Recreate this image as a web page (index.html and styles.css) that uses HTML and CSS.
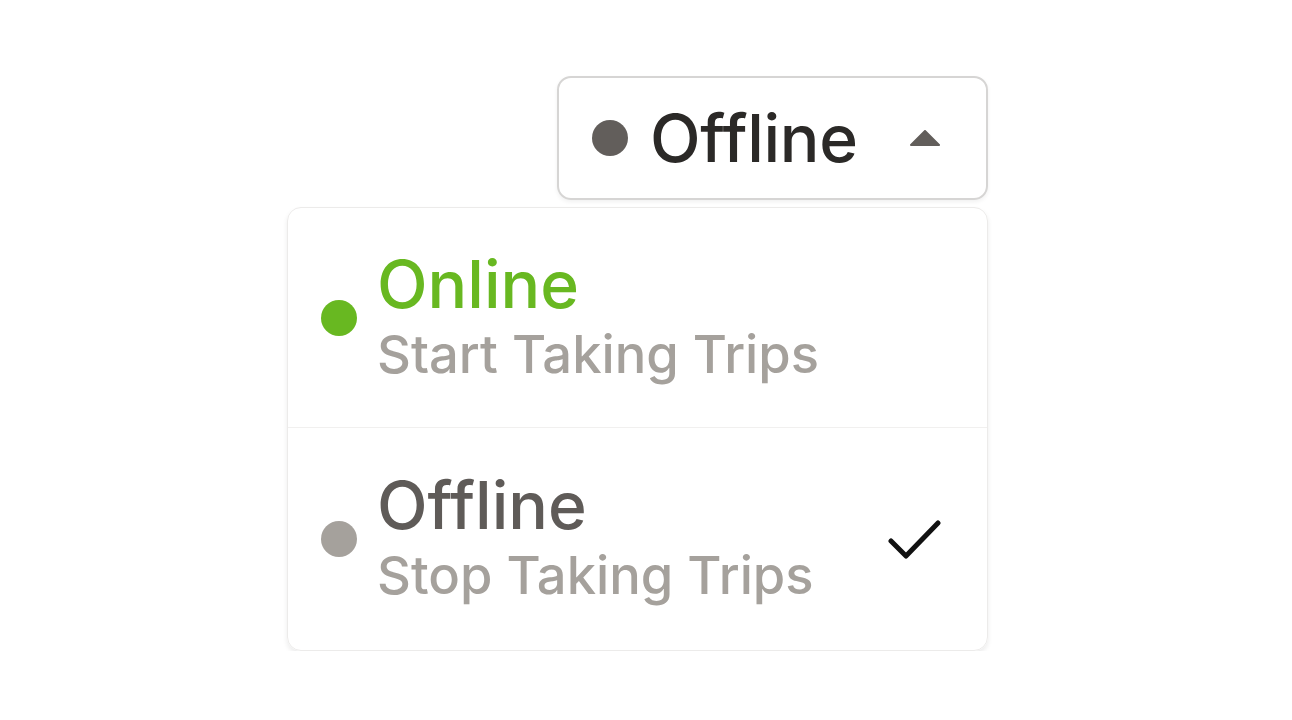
FILE: index.html
```html
<!DOCTYPE html>
<html>
<head>
<meta charset="utf-8">
<link rel="stylesheet" href="styles.css">
</head>
<body>
<div class="wrap">
  <div class="select">
    <span class="dot dot-dark"></span>
    <span class="select-label">Offline</span>
    <svg class="caret" width="32" height="16" viewBox="0 0 32 16"><path d="M16 1 L30 15 L2 15 Z" fill="#625e5b" stroke="#625e5b" stroke-width="2" stroke-linejoin="round"/></svg>
  </div>
  <div class="menu">
    <div class="item">
      <span class="dot dot-green"></span>
      <div class="texts">
        <div class="title green">Online</div>
        <div class="sub">Start Taking Trips</div>
      </div>
    </div>
    <div class="item item-last">
      <span class="dot dot-gray"></span>
      <div class="texts">
        <div class="title gray">Offline</div>
        <div class="sub">Stop Taking Trips</div>
      </div>
      <svg class="check" width="54" height="44" viewBox="0 0 54 44"><path d="M3 24 L18 39 L50 6" fill="none" stroke="#111" stroke-width="5" stroke-linecap="round" stroke-linejoin="round"/></svg>
    </div>
  </div>
</div>
</body>
</html>
```
FILE: styles.css
```css
html, body { margin: 0; padding: 0; background: #fff; }
body { font-family: "Inter", "Open Sans", sans-serif; }
.wrap {
  width: 701px;
  margin-left: 287px;
  padding-top: 76px;
  display: flex;
  flex-direction: column;
  align-items: flex-end;
  gap: 7px;
}
.select {
  box-sizing: border-box;
  width: 431px;
  height: 124px;
  border: 2px solid #d6d5d4;
  border-radius: 14px;
  box-shadow: 0 2px 4px rgba(0,0,0,0.06);
  display: flex;
  align-items: center;
  padding-left: 33px;
}
.dot { width: 36px; height: 36px; border-radius: 50%; flex: none; }
.dot-dark { background: #625e5b; }
.dot-green { background: #68b821; }
.dot-gray { background: #a5a19c; }
.select-label {
  margin-left: 22px;
  font-size: 66px;
  color: #2b2927;
  font-weight: 500;
  letter-spacing: -0.3px;
}
.caret { margin-left: auto; margin-right: 45px; }
.menu {
  box-sizing: border-box;
  width: 701px;
  border: 1px solid #ecebea;
  border-radius: 14px;
  box-shadow: 0 3px 5px rgba(0,0,0,0.08);
  display: flex;
  flex-direction: column;
}
.item {
  height: 219px;
  display: flex;
  align-items: center;
  padding-left: 33px;
  padding-right: 45px;
}
.item-last { height: 222px; }
.item + .item { border-top: 1px solid #f1f0ef; }
.texts { margin-left: 20px; display: flex; flex-direction: column; }
.title { font-size: 66px; line-height: 72px; font-weight: 500; }
.green { color: #68b821; }
.gray { color: #5f5b58; }
.sub { font-size: 52.5px; line-height: 68px; color: #a5a19c; font-weight: 500; }
.check { margin-left: auto; }
```
